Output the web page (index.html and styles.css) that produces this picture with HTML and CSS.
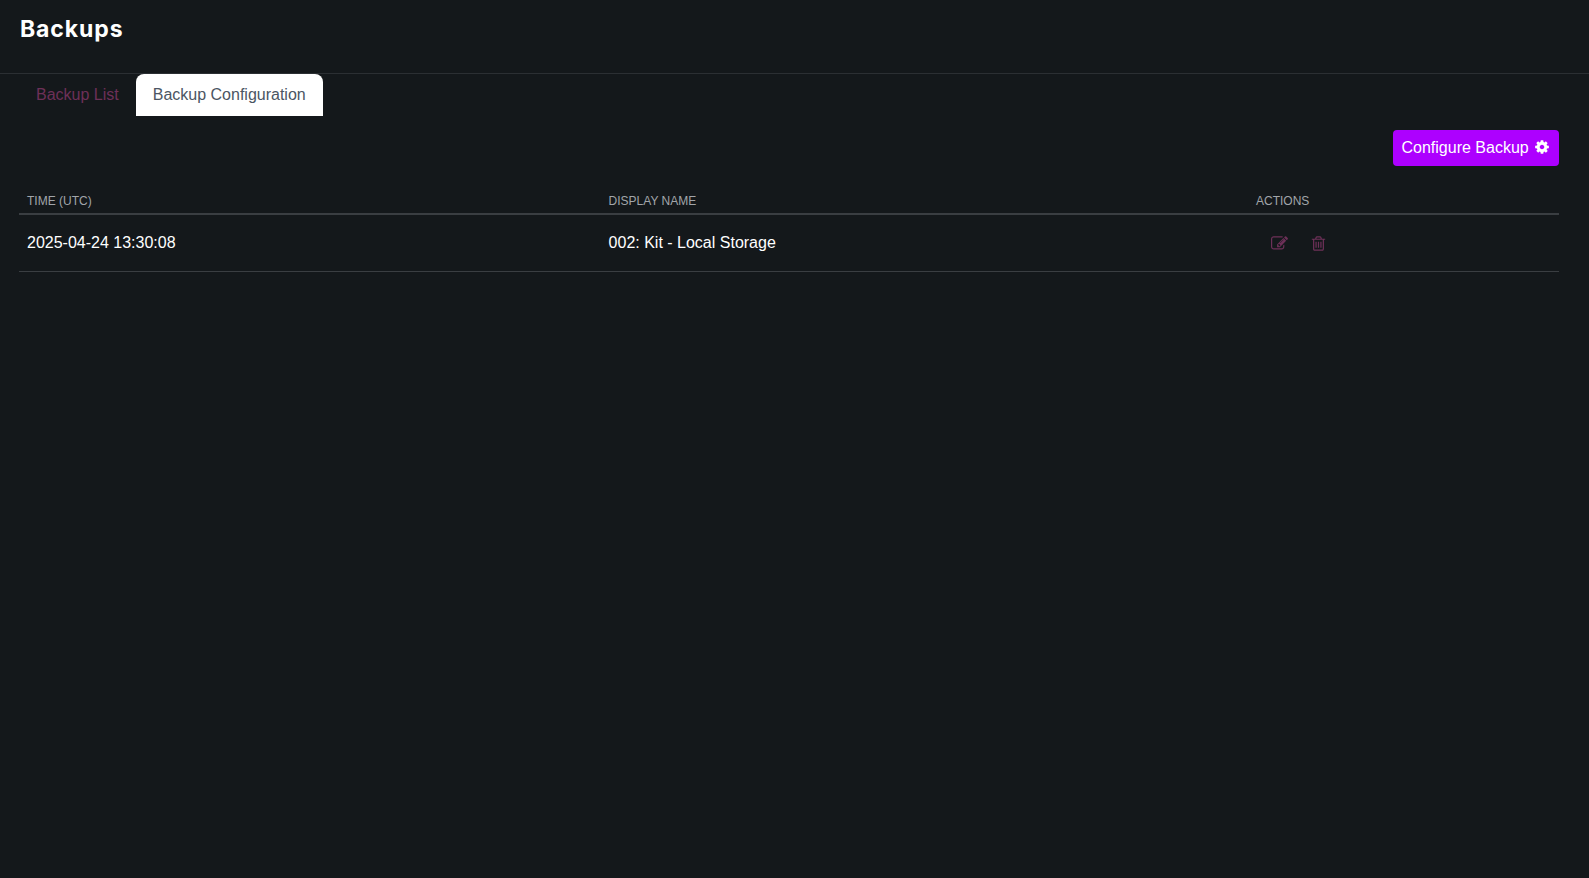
FILE: index.html
```html
<!DOCTYPE html>
<html lang="en">
<head>
<meta charset="utf-8">
<title>Backups</title>
<link rel="stylesheet" href="styles.css">
</head>
<body>
<header class="page-header"><h1 class="page-title">Backups</h1></header>
<nav class="tabs">
  <a class="tab" href="#">Backup List</a>
  <a class="tab tab-active" href="#">Backup Configuration</a>
</nav>
<main class="content">
  <div class="toolbar">
    <button class="btn-primary" type="button">Configure Backup
      <svg class="gear" viewBox="0 0 1792 1792" aria-hidden="true"><path fill="currentColor" d="M1152 896q0-106-75-181t-181-75-181 75-75 181 75 181 181 75 181-75 75-181zm512-109v222q0 12-8 23t-20 13l-185 28q-19 54-39 91 35 50 107 138 10 12 10 25t-9 23q-27 37-99 108t-94 71q-12 0-26-9l-138-108q-44 23-91 38-16 136-29 186-7 28-36 28h-222q-14 0-24.5-8.5t-11.5-21.5l-28-184q-49-16-90-37l-141 107q-10 9-25 9-14 0-25-11-126-114-165-168-7-10-7-23 0-12 8-23 15-21 51-66.5t54-70.5q-27-50-41-99l-183-27q-13-2-21-12.5t-8-23.5v-222q0-12 8-23t19-13l186-28q14-46 39-92-40-57-107-138-10-12-10-24 0-10 9-23 26-36 98.5-107.5t94.5-71.5q13 0 26 10l138 107q44-23 91-38 16-136 29-186 7-28 36-28h222q14 0 24.5 8.5t11.5 21.5l28 184q49 16 90 37l142-107q9-9 24-9 13 0 25 10 129 119 165 170 7 8 7 22 0 12-8 23-15 21-51 66.5t-54 70.5q26 50 41 98l183 28q13 2 21 12.5t8 23.5z"/></svg>
    </button>
  </div>
  <table class="data-table">
    <colgroup><col class="col-time"><col class="col-name"><col class="col-actions"></colgroup>
    <thead>
      <tr><th>TIME (UTC)</th><th>DISPLAY NAME</th><th>ACTIONS</th></tr>
    </thead>
    <tbody>
      <tr>
        <td>2025-04-24 13:30:08</td>
        <td>002: Kit - Local Storage</td>
        <td>
          <div class="actions">
            <a class="icon-btn" href="#" aria-label="Edit"><svg class="icon" viewBox="0 0 1792 1792" aria-hidden="true"><path fill="currentColor" d="M888 1184l116-116-152-152-116 116v56h96v96h56zm440-720q-16-16-33 1l-350 350q-17 17-1 33t33-1l350-350q17-17 1-33zm80 594v190q0 119-84.5 203.5t-203.5 84.5h-832q-119 0-203.5-84.5t-84.5-203.5v-832q0-119 84.5-203.5t203.5-84.5h832q63 0 117 25 15 7 18 23 3 17-9 29l-49 49q-14 14-32 8-23-6-45-6h-832q-66 0-113 47t-47 113v832q0 66 47 113t113 47h832q66 0 113-47t47-113v-126q0-13 9-22l64-64q15-15 35-7t20 29zm-96-738l288 288-672 672h-288v-288zm444 132l-92 92-288-288 92-92q28-28 68-28t68 28l152 152q28 28 28 68t-28 68z"/></svg></a>
            <a class="icon-btn" href="#" aria-label="Delete"><svg class="icon" viewBox="0 0 1792 1792" aria-hidden="true"><path fill="currentColor" d="M704 736v576q0 14-9 23t-23 9h-64q-14 0-23-9t-9-23v-576q0-14 9-23t23-9h64q14 0 23 9t9 23zm256 0v576q0 14-9 23t-23 9h-64q-14 0-23-9t-9-23v-576q0-14 9-23t23-9h64q14 0 23 9t9 23zm256 0v576q0 14-9 23t-23 9h-64q-14 0-23-9t-9-23v-576q0-14 9-23t23-9h64q14 0 23 9t9 23zm128 724v-948h-896v948q0 22 7 40.5t14.5 27 10.5 8.5h832q3 0 10.5-8.5t14.5-27 7-40.5zm-672-1076h448l-48-117q-7-9-17-11h-317q-10 2-17 11zm928 32v64q0 14-9 23t-23 9h-96v948q0 83-47 143.5t-113 60.5h-832q-66 0-113-58.5t-47-141.5v-952h-96q-14 0-23-9t-9-23v-64q0-14 9-23t23-9h309l70-167q15-37 54-63t79-26h320q40 0 79 26t54 63l70 167h309q14 0 23 9t9 23z"/></svg></a>
          </div>
        </td>
      </tr>
    </tbody>
  </table>
</main>
</body>
</html>
```
FILE: styles.css
```css
* { box-sizing: border-box; }
html, body { height: 100%; }
body {
  margin: 0;
  background: #14181b;
  color: #fff;
  font-family: "Liberation Sans", Arial, sans-serif;
  font-size: 16px;
  overflow: hidden;
}
.page-header {
  height: 74px;
  padding: 14px 20px 0;
  border-bottom: 1px solid #2b2f33;
}
.page-title {
  margin: 0;
  font-family: Inter, sans-serif;
  font-size: 23px;
  line-height: 30px;
  font-weight: 700;
  letter-spacing: 0.9px;
  color: #fff;
}
.tabs {
  display: flex;
  height: 42px;
  padding-left: 19px;
}
.tab {
  display: flex;
  align-items: center;
  padding: 0 17px;
  color: #6d3058;
  text-decoration: none;
  line-height: 24px;
  border-radius: 8px 8px 0 0;
}
.tab-active {
  background: #fff;
  color: #4b5563;
}
.content { padding: 0 30px 0 19px; }
.toolbar {
  display: flex;
  justify-content: flex-end;
  padding-top: 14px;
}
.btn-primary {
  display: flex;
  align-items: center;
  gap: 5.5px;
  height: 36px;
  padding: 0 8px 0 8.5px;
  border: 0;
  border-radius: 4px;
  background: #ad00ff;
  color: #fff;
  font: inherit;
  width: 166px;
}
.gear { width: 16px; height: 16px; position: relative; top: -1px; }
.data-table {
  width: 100%;
  table-layout: fixed;
  border-collapse: collapse;
  margin-top: 20px;
}
.col-time { width: 581.6px; }
.col-name { width: 647.4px; }
.data-table th {
  height: 28px;
  padding: 2px 8px 0;
  text-align: left;
  font-size: 12px;
  font-weight: 400;
  color: #a1a5aa;
  border-bottom: 2px solid #3a3e42;
}
.data-table td {
  height: 57px;
  padding: 0 8px;
  color: #fff;
  border-bottom: 1px solid #3a3e42;
}
.actions {
  display: flex;
  align-items: center;
  gap: 21.5px;
  padding: 1px 0 0 15.5px;
}
.icon-btn { display: flex; color: #6d3058; }
.icon { width: 17px; height: 17px; }
```
